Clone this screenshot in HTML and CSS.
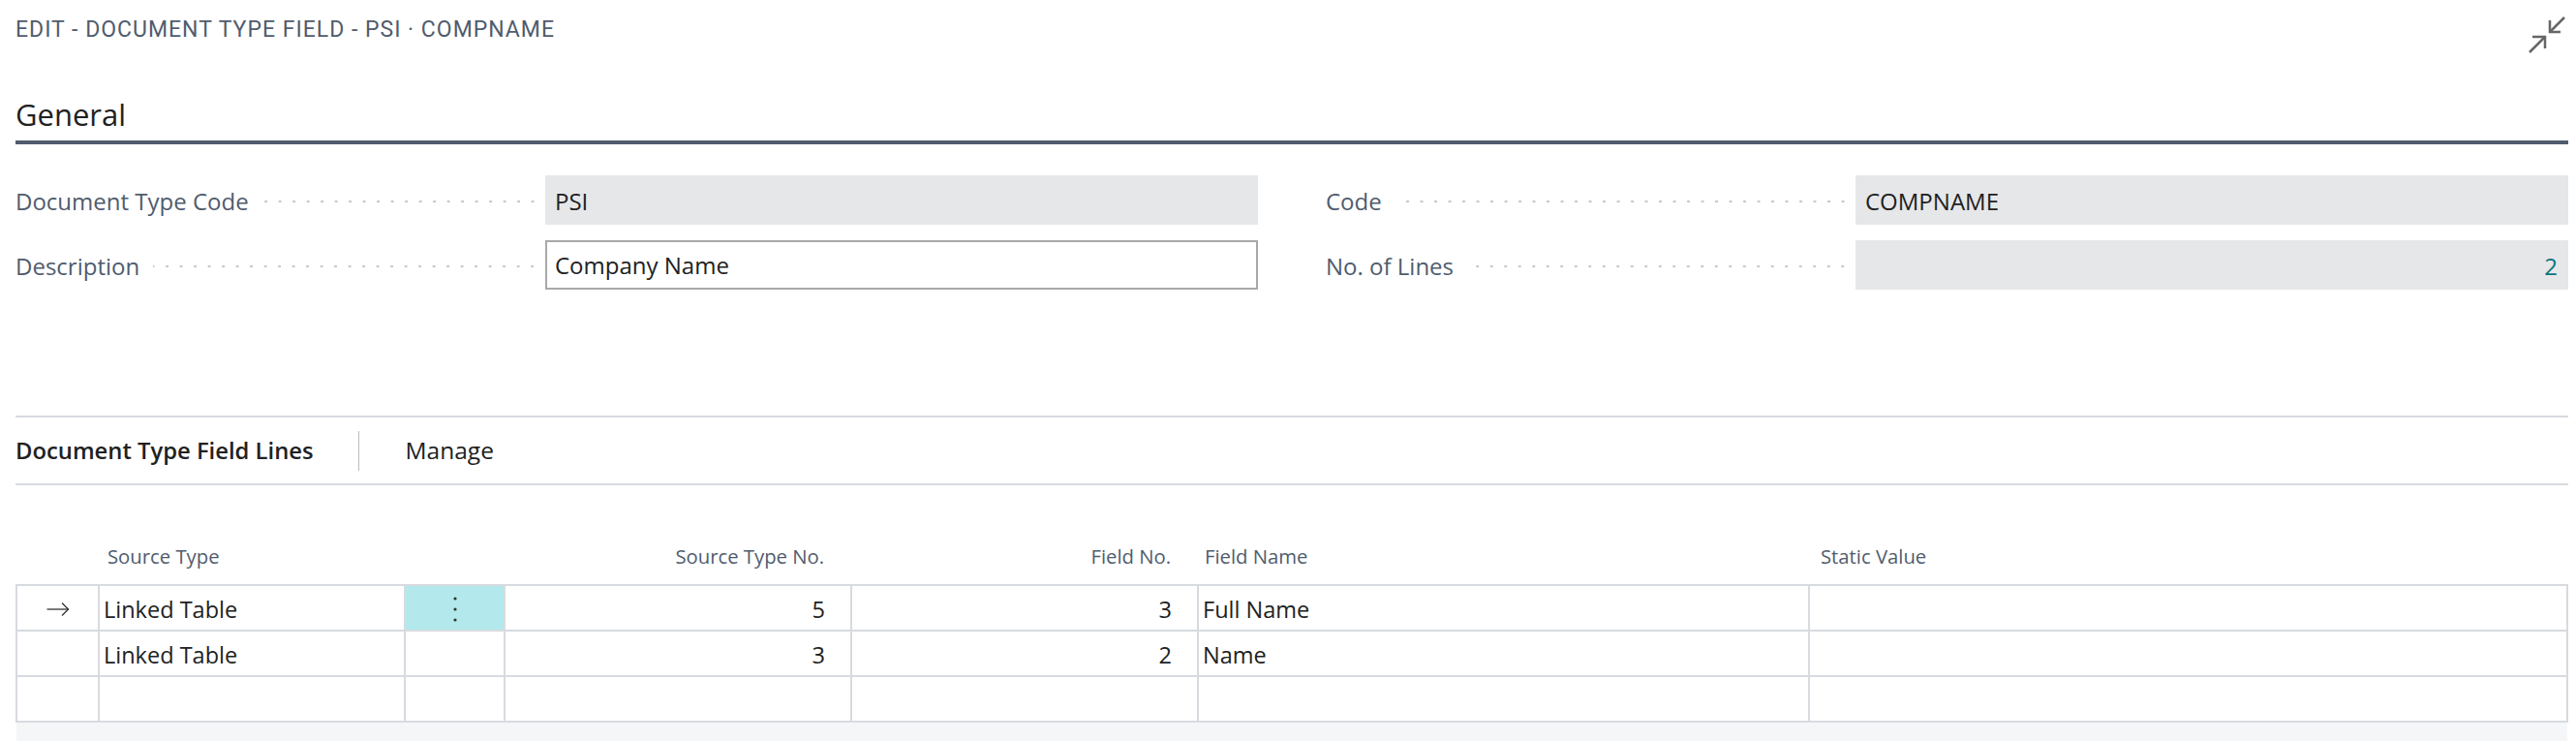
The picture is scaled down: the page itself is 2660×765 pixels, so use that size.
FILE: index.html
```html
<!DOCTYPE html>
<html lang="en">
<head>
<meta charset="utf-8">
<title>Edit - Document Type Field - PSI · COMPNAME</title>
<link rel="stylesheet" href="styles.css">
</head>
<body>
<header class="page-head">
  <h1 class="page-title">EDIT - DOCUMENT TYPE FIELD - PSI · COMPNAME</h1>
  <button class="collapse-btn" type="button" aria-label="Collapse">
    <svg viewBox="0 0 40 40" width="40" height="40" fill="none" stroke="#666666" stroke-width="2.5" stroke-linecap="butt" stroke-linejoin="miter">
      <path d="M38 2 L23.5 16.5"/>
      <path d="M23 5 V17 H34"/>
      <path d="M2 38 L17.5 22.5"/>
      <path d="M5 22 H18 V34"/>
    </svg>
  </button>
</header>

<section class="fasttab">
  <h2 class="fasttab-title">General</h2>
  <div class="field-grid">
    <div class="field-col">
      <div class="field">
        <div class="field-caption"><span class="label">Document Type Code</span><span class="leader"></span></div>
        <div class="value">PSI</div>
      </div>
      <div class="field">
        <div class="field-caption"><span class="label">Description</span><span class="leader"></span></div>
        <div class="value input">Company Name</div>
      </div>
    </div>
    <div class="field-col">
      <div class="field">
        <div class="field-caption"><span class="label">Code</span><span class="leader"></span></div>
        <div class="value">COMPNAME</div>
      </div>
      <div class="field">
        <div class="field-caption"><span class="label">No. of Lines</span><span class="leader"></span></div>
        <div class="value num">2</div>
      </div>
    </div>
  </div>
</section>

<section class="part">
  <div class="part-bar">
    <span class="part-title">Document Type Field Lines</span>
    <span class="bar-sep"></span>
    <span class="bar-action">Manage</span>
  </div>
  <table class="grid">
    <colgroup>
      <col class="c-ind">
      <col class="c-stype">
      <col class="c-menu">
      <col class="c-stno">
      <col class="c-fno">
      <col class="c-fname">
      <col class="c-static">
    </colgroup>
    <thead>
      <tr>
        <th></th>
        <th>Source Type</th>
        <th></th>
        <th class="r">Source Type No.</th>
        <th class="r">Field No.</th>
        <th class="fn">Field Name</th>
        <th class="sv">Static Value</th>
      </tr>
    </thead>
    <tbody>
      <tr>
        <td class="ind">
          <svg class="arrow" viewBox="0 0 24 16" width="24" height="16" fill="none" stroke="#333333" stroke-width="1.3">
            <path d="M0.5 8 H23"/>
            <path d="M16 1.5 L22.5 8 L16 14.5"/>
          </svg>
        </td>
        <td>Linked Table</td>
        <td class="menu">
          <svg viewBox="0 0 6 26" width="6" height="26"><circle cx="3" cy="2" r="1.6" fill="#333"/><circle cx="3" cy="13" r="1.6" fill="#333"/><circle cx="3" cy="24" r="1.6" fill="#333"/></svg>
        </td>
        <td class="r">5</td>
        <td class="r">3</td>
        <td>Full Name</td>
        <td></td>
      </tr>
      <tr>
        <td class="ind"></td>
        <td>Linked Table</td>
        <td></td>
        <td class="r">3</td>
        <td class="r">2</td>
        <td>Name</td>
        <td>&nbsp;</td>
      </tr>
      <tr>
        <td class="ind"></td>
        <td>&nbsp;</td>
        <td></td>
        <td></td>
        <td></td>
        <td></td>
        <td></td>
      </tr>
    </tbody>
  </table>
  <div class="grid-foot"></div>
</section>
</body>
</html>
```

FILE: styles.css
```css
* { box-sizing: border-box; }

html, body {
  margin: 0;
  background: #ffffff;
}

body {
  width: 2660px;
  height: 765px;
  overflow: hidden;
  padding: 0 8px 0 16px;
  font-family: "Open Sans", "Noto Sans", sans-serif;
  color: #212121;
}

/* ---------- page header ---------- */
.page-head {
  display: flex;
  justify-content: space-between;
  align-items: flex-start;
  height: 45px;
  padding-top: 17px;
}

.page-title {
  margin: 0;
  font-family: Roboto, "Liberation Sans", sans-serif;
  font-weight: 400;
  font-size: 23px;
  line-height: 28px;
  letter-spacing: 1px;
  color: #505c6d;
  white-space: nowrap;
}

.collapse-btn {
  display: block;
  width: 40px;
  height: 40px;
  margin: -1px 2px 0 0;
  padding: 0;
  border: 0;
  background: none;
}

.collapse-btn svg { display: block; }

/* ---------- General fasttab ---------- */
.fasttab-title {
  margin: 53px 0 0;
  font-size: 31px;
  font-weight: 400;
  line-height: 40px;
  padding-bottom: 7px;
  border-bottom: 4px solid #505c6d;
  color: #212121;
}

.field-grid {
  margin-top: 32px;
  display: grid;
  grid-template-columns: 1283px 1283px;
  column-gap: 70px;
}

.field-col {
  display: flex;
  flex-direction: column;
  gap: 16px;
}

.field {
  display: flex;
  height: 51px;
  font-size: 24px;
}

.field-caption {
  width: 547px;
  display: flex;
  padding-top: 2px;
  line-height: 49px;
}

.label {
  color: #505c6d;
  white-space: nowrap;
}

.leader {
  flex: 1;
  margin: 0 6px 0 14px;
  background-image: radial-gradient(circle, #c9c9c9 0, #c9c9c9 1.1px, rgba(201,201,201,0) 1.6px);
  background-size: 14.5px 4px;
  background-repeat: repeat-x;
  background-position: right 0 top 23px;
}

.value {
  flex: 1;
  background: #e6e7e9;
  padding: 2px 10px 0;
  line-height: 49px;
  white-space: nowrap;
  color: #212121;
}

.value.input {
  background: #ffffff;
  border: 2px solid #a8a8a8;
  padding: 0 8px;
  line-height: 47px;
}

.value.num {
  text-align: right;
  color: #0b7480;
  padding-right: 11px;
}

/* ---------- lines part ---------- */
.part {
  margin-top: 130px;
}

.part-bar {
  display: flex;
  align-items: center;
  height: 72px;
  border-top: 2px solid #d7dadf;
  border-bottom: 2px solid #d7dadf;
}

.part-title {
  font-weight: 600;
  font-size: 23.8px;
  line-height: 68px;
  white-space: nowrap;
}

.bar-sep {
  width: 1px;
  height: 41px;
  background: #bdbdbd;
  margin: 0 48px 0 46px;
}

.bar-action {
  font-size: 24.5px;
  line-height: 68px;
  color: #212121;
}

.grid {
  margin-top: 59px;
  border-collapse: collapse;
  table-layout: fixed;
  width: 2636px;
}

.c-ind { width: 85px; }
.c-stype { width: 316px; }
.c-menu { width: 103px; }
.c-stno { width: 358px; }
.c-fno { width: 358px; }
.c-fname { width: 631px; }
.c-static { width: 783px; }

.grid th {
  font-weight: 400;
  font-size: 20.3px;
  line-height: 28px;
  padding: 0 28px 15px 9px;
  color: #505c6d;
  text-align: left;
  vertical-align: bottom;
  white-space: nowrap;
}

.grid th.fn { padding-left: 7px; }
.grid th.sv { padding-left: 12px; }
.grid th.r { text-align: right; }

.grid td {
  font-size: 23.5px;
  line-height: 42px;
  padding: 3px 26px 0 4px;
  border: 2px solid #d7dadf;
  vertical-align: top;
  white-space: nowrap;
  overflow: hidden;
  color: #212121;
}

.grid td.r { text-align: right; }

.grid td.ind,
.grid td.menu {
  padding: 0;
}

.grid td.menu {
  background: #b3e9ec;
}

.grid td.menu svg {
  display: block;
  margin: 11px auto 0;
}

.grid td.ind .arrow {
  display: block;
  margin: 16px auto 0;
}

.grid-foot {
  margin-left: 1px;
  width: 2634px;
  height: 20px;
  background: #f5f6f8;
}
```
